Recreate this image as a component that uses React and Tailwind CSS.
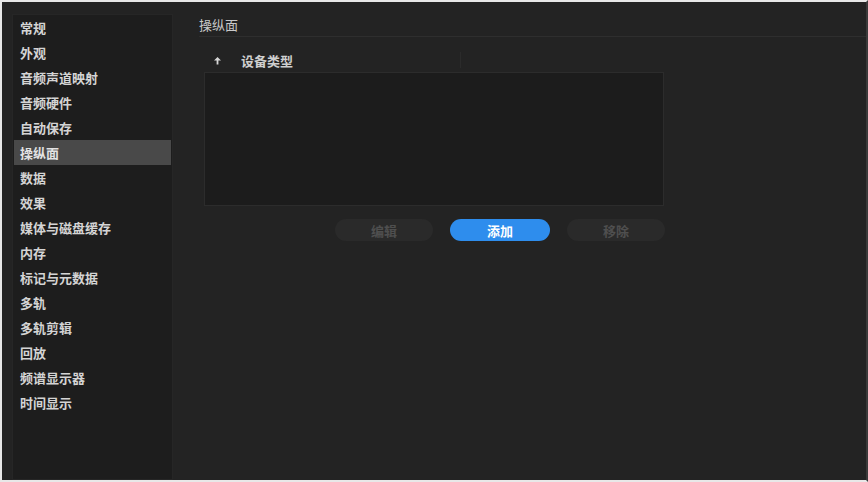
const items = [
  '常规', '外观', '音频声道映射', '音频硬件', '自动保存', '操纵面', '数据', '效果',
  '媒体与磁盘缓存', '内存', '标记与元数据', '多轨', '多轨剪辑', '回放', '频谱显示器', '时间显示',
]

const font = { fontFamily: '"Noto Sans CJK SC", "Noto Sans", sans-serif' }

export default function App() {
  return (
    <div
      className="w-[868px] h-[482px] bg-[#232323] border-2 border-t-[#e8e8e8] border-l-[#e8e8e8] border-b-[#e8e8e8] border-r-[#3a3a3a] flex overflow-hidden"
      style={font}
    >
      {/* sidebar */}
      <div className="ml-[10px] mt-[12px] w-[161px] shrink-0 bg-[#1d1d1d] border border-[#262626] px-[1px]">
        {items.map(label => (
          <div
            key={label}
            className={`h-[25px] flex items-center pl-[6px] text-[13px] font-bold leading-none ${label === '操纵面' ? 'bg-[#494949] text-[#e2e2e2]' : 'text-[#d4d4d4]'}`}
          >
            {label}
          </div>
        ))}
      </div>

      {/* content */}
      <div className="flex-1 pl-[26px] pt-[10px]">
        <div className="h-[25px] flex items-center text-[13px] text-[#c9c9c9] leading-none border-b border-[#2e2e2e] -mr-[2px]">
          操纵面
        </div>

        <div className="ml-[5px] w-[460px] mt-[11px]">
          <div className="h-[24px] flex items-center text-[13px] text-[#cfcfcf] leading-none font-bold">
            <span className="w-[26px] flex justify-center">
              <svg width="9" height="9" viewBox="0 0 9 9">
                <path d="M4.5 1 L8 4.5 H5.4 V8.5 H3.6 V4.5 H1 Z" fill="#d6d6d6" />
              </svg>
            </span>
            <span className="ml-[11px] w-[219px]">设备类型</span>
            <span className="h-[16px] w-px bg-[#2b2b2b]" />
          </div>
          <div className="h-[134px] bg-[#1c1c1c] border border-[#2c2c2c]" />
        </div>

        <div className="ml-[136px] mt-[13px] flex gap-[17px] text-[13px] leading-none font-bold">
          <button className="w-[98px] h-[22px] rounded-full bg-[#2a2a2a] text-[#4f4f4f]">编辑</button>
          <button className="w-[100px] h-[22px] rounded-full bg-[#2e8ded] text-white">添加</button>
          <button className="w-[98px] h-[22px] rounded-full bg-[#2a2a2a] text-[#4f4f4f]">移除</button>
        </div>
      </div>
    </div>
  )
}
